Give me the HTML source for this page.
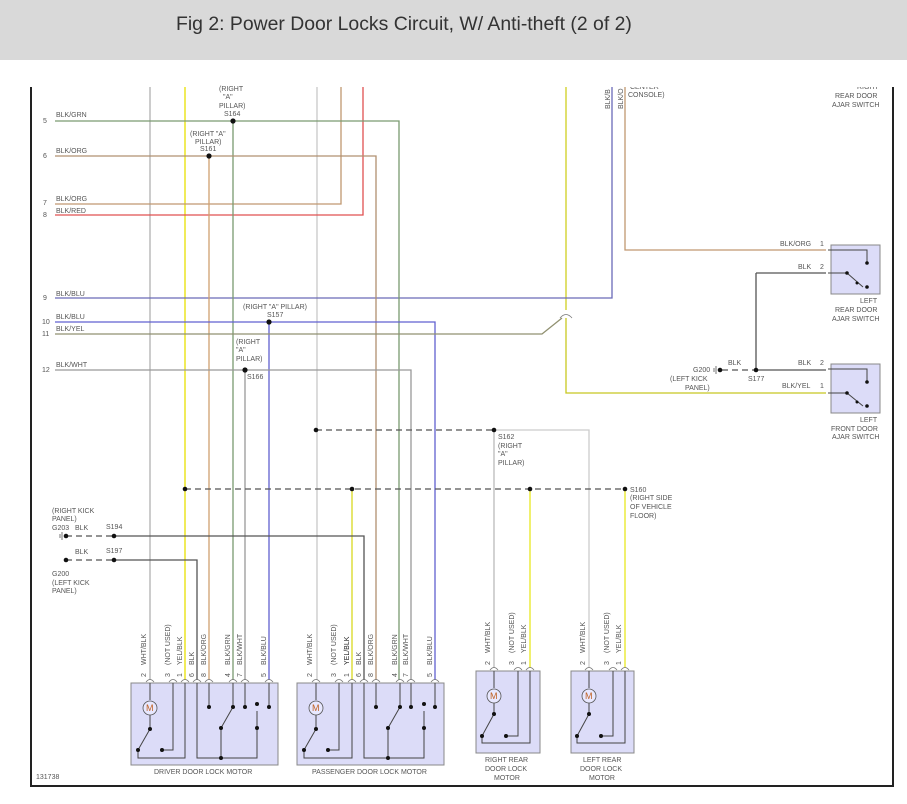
<!DOCTYPE html>
<html><head><meta charset="utf-8"><style>
html,body{margin:0;padding:0;background:#fff;}
body{width:907px;height:804px;overflow:hidden;position:relative;font-family:"Liberation Sans",sans-serif;}
.hdr{position:absolute;left:0;top:0;width:907px;height:60px;background:#d9d9d9;}
.hdr span{position:absolute;left:176px;top:13px;font-size:19.4px;color:#333;}
svg{position:absolute;left:0;top:0;}
text{font-family:"Liberation Sans",sans-serif;font-size:7px;fill:#555;}
</style></head><body>
<div class="hdr"><span>Fig 2: Power Door Locks Circuit, W/ Anti-theft (2 of 2)</span></div>
<svg width="907" height="804" viewBox="0 0 907 804">
<defs>
<g id="chev"><path d="M-4,2 Q0,-3 4,2" fill="none" stroke="#777" stroke-width="0.8"/></g>
<clipPath id="cp"><rect x="0" y="87" width="907" height="717"/></clipPath>
</defs>
<path d="M31,87 V786 H893 V87" fill="none" stroke="#222" stroke-width="2"/>
<g clip-path="url(#cp)"><text x="630" y="89">CENTER</text><text x="857" y="89">RIGHT</text></g>
<g fill="none" stroke-width="1.3">
<path d="M150,87 V680" stroke="#b0b0b0"/>
<path d="M185,87 V680" stroke="#e8e000"/>
<path d="M317,87 V680" stroke="#c8c8c8"/>
<path d="M341,87 V204 H55" stroke="#c09870"/>
<path d="M363,87 V215 H55" stroke="#e05050"/>
<path d="M566,87 V310" stroke="#d0d020"/>
<path d="M566,318 V393 H826" stroke="#c8c820"/>
<path d="M612,87 V298 H55" stroke="#6a6ab8"/>
<path d="M625,87 V250 H826" stroke="#c09870"/>
<path d="M55,121 H399 V680" stroke="#7a9a70"/>
<path d="M233,121 V680" stroke="#7a9a70"/>
<path d="M55,156 H376 V680" stroke="#b09070"/>
<path d="M209,156 V680" stroke="#d0a070"/>
<path d="M55,322 H435 V680" stroke="#6060d0"/>
<path d="M269,322 V680" stroke="#6060d0"/>
<path d="M55,334 H542 L562,318" stroke="#909070"/>
<path d="M55,370 H411 V680" stroke="#999"/>
<path d="M245,370 V680" stroke="#999"/>
<path d="M352,489 V680" stroke="#d8d820"/>
<path d="M494,430 H589 V668" stroke="#ccc"/>
<path d="M494,430 V668" stroke="#bbb"/>
<path d="M530,489 V668" stroke="#e8e820"/>
<path d="M625,489 V668" stroke="#e8e820"/>
<path d="M114,536 H364 V680" stroke="#555"/>
<path d="M114,560 H197 V680" stroke="#555"/>
<path d="M756,273 H826 M756,273 V370 H826" stroke="#555"/>
</g>
<g fill="none" stroke="#555" stroke-width="1.3" stroke-dasharray="6,4">
<path d="M316,430 H494"/>
<path d="M185,489 H625"/>
<path d="M66,536 H114"/>
<path d="M66,560 H114"/>
<path d="M722,370 H756"/>
</g>
<path d="M560,318 Q566,311 572,318" fill="none" stroke="#777" stroke-width="0.8"/>
<g fill="#111">
<circle cx="233" cy="121" r="2.6"/><circle cx="209" cy="156" r="2.6"/><circle cx="269" cy="322" r="2.6"/><circle cx="245" cy="370" r="2.6"/>
<circle cx="316" cy="430" r="2.3"/><circle cx="494" cy="430" r="2.3"/>
<circle cx="185" cy="489" r="2.3"/><circle cx="352" cy="489" r="2.3"/><circle cx="530" cy="489" r="2.3"/><circle cx="625" cy="489" r="2.3"/>
<circle cx="114" cy="536" r="2.3"/><circle cx="114" cy="560" r="2.3"/><circle cx="66" cy="536" r="2.3"/><circle cx="66" cy="560" r="2.3"/>
<circle cx="756" cy="370" r="2.3"/><circle cx="720" cy="370" r="2.3"/>
</g>
<g stroke="#555" stroke-width="0.8"><path d="M62,532 V540 M60,534 V538 M716,366 V374 M714,368 V372"/></g>
<text x="43" y="123">5</text><text x="56" y="117">BLK/GRN</text>
<text x="43" y="158">6</text><text x="56" y="153">BLK/ORG</text>
<text x="43" y="205">7</text><text x="56" y="201">BLK/ORG</text>
<text x="43" y="217">8</text><text x="56" y="213">BLK/RED</text>
<text x="43" y="300">9</text><text x="56" y="296">BLK/BLU</text>
<text x="42" y="324">10</text><text x="56" y="319">BLK/BLU</text>
<text x="42" y="336">11</text><text x="56" y="331">BLK/YEL</text>
<text x="42" y="372">12</text><text x="56" y="367">BLK/WHT</text>
<text x="219" y="91">(RIGHT</text><text x="223" y="99">"A"</text><text x="219" y="108">PILLAR)</text><text x="224" y="116">S164</text>
<text x="190" y="136">(RIGHT "A"</text><text x="195" y="144">PILLAR)</text><text x="200" y="151">S161</text>
<text x="243" y="309">(RIGHT "A" PILLAR)</text><text x="267" y="317">S157</text>
<text x="236" y="344">(RIGHT</text><text x="236" y="352">"A"</text><text x="236" y="361">PILLAR)</text><text x="247" y="379">S166</text>
<text x="498" y="439">S162</text><text x="498" y="448">(RIGHT</text><text x="498" y="456">"A"</text><text x="498" y="465">PILLAR)</text>
<text x="630" y="492">S160</text><text x="630" y="500">(RIGHT SIDE</text><text x="630" y="509">OF VEHICLE</text><text x="630" y="518">FLOOR)</text>
<text x="52" y="513">(RIGHT KICK</text><text x="52" y="521">PANEL)</text><text x="52" y="530">G203</text><text x="75" y="530">BLK</text><text x="106" y="529">S194</text>
<text x="75" y="554">BLK</text><text x="106" y="553">S197</text>
<text x="52" y="576">G200</text><text x="52" y="585">(LEFT KICK</text><text x="52" y="593">PANEL)</text>
<text x="628" y="97">CONSOLE)</text>
<text transform="translate(610,109) rotate(-90)">BLK/B</text>
<text transform="translate(623,109) rotate(-90)">BLK/O</text>
<text x="835" y="98">REAR DOOR</text><text x="832" y="107">AJAR SWITCH</text>
<text x="780" y="246">BLK/ORG</text><text x="820" y="246">1</text>
<text x="798" y="269">BLK</text><text x="820" y="269">2</text>
<text x="860" y="303">LEFT</text><text x="835" y="312">REAR DOOR</text><text x="832" y="321">AJAR SWITCH</text>
<text x="728" y="365">BLK</text><text x="693" y="372">G200</text><text x="670" y="381">(LEFT KICK</text><text x="685" y="390">PANEL)</text><text x="748" y="381">S177</text>
<text x="798" y="365">BLK</text><text x="820" y="365">2</text>
<text x="782" y="388">BLK/YEL</text><text x="820" y="388">1</text>
<text x="860" y="422">LEFT</text><text x="831" y="431">FRONT DOOR</text><text x="832" y="439">AJAR SWITCH</text>
<text x="36" y="779">131738</text>
<g>
<rect x="831" y="245" width="49" height="49" fill="#dcdcf8" stroke="#888"/>
<rect x="831" y="364" width="49" height="49" fill="#dcdcf8" stroke="#888"/>
<path d="M828,250 H867 V263 M828,273 H847 L863,287 M828,369 H867 V382 M828,393 H847 L863,406" fill="none" stroke="#444" stroke-width="1"/>
<g fill="#111"><circle cx="867" cy="263" r="1.8"/><circle cx="847" cy="273" r="1.8"/><circle cx="857" cy="283" r="1.5"/><circle cx="867" cy="287" r="1.8"/>
<circle cx="867" cy="382" r="1.8"/><circle cx="847" cy="393" r="1.8"/><circle cx="857" cy="402" r="1.5"/><circle cx="867" cy="406" r="1.8"/></g>
</g>
<g stroke="#888" fill="#dcdcf8">
<rect x="131" y="683" width="147" height="82"/>
<rect x="297" y="683" width="147" height="82"/>
<rect x="476" y="671" width="64" height="82"/>
<rect x="571" y="671" width="63" height="82"/>
</g>
<g fill="none" stroke="#444" stroke-width="1">
<path d="M150,683 V700 M150,715 V729 L138,750 M138,750 V758 H185 V683 M173,683 V750 H162 M197,683 V758 H257 V711 M209,683 V707 M233,683 V707 L221,728 V758 M245,683 V707 M269,683 V707"/>
<path d="M316,683 V700 M316,715 V729 L304,750 M304,750 V758 H352 V683 M339,683 V750 H328 M364,683 V758 H424 V711 M376,683 V707 M400,683 V707 L388,728 V758 M411,683 V707 M435,683 V707"/>
<path d="M494,671 V688 M494,703 V714 L482,736 V743 H530 V671 M518,671 V736 H506"/>
<path d="M589,671 V688 M589,703 V714 L577,736 V743 H625 V671 M613,671 V736 H601"/>
</g>
<g fill="#111">
<circle cx="150" cy="729" r="2"/><circle cx="138" cy="750" r="2"/><circle cx="162" cy="750" r="2"/><circle cx="209" cy="707" r="2"/><circle cx="233" cy="707" r="2"/><circle cx="221" cy="728" r="2"/><circle cx="245" cy="707" r="2"/><circle cx="269" cy="707" r="2"/><circle cx="257" cy="704" r="2"/><circle cx="257" cy="728" r="2"/><circle cx="221" cy="758" r="2"/>
<circle cx="316" cy="729" r="2"/><circle cx="304" cy="750" r="2"/><circle cx="328" cy="750" r="2"/><circle cx="376" cy="707" r="2"/><circle cx="400" cy="707" r="2"/><circle cx="388" cy="728" r="2"/><circle cx="411" cy="707" r="2"/><circle cx="435" cy="707" r="2"/><circle cx="424" cy="704" r="2"/><circle cx="424" cy="728" r="2"/><circle cx="388" cy="758" r="2"/>
<circle cx="494" cy="714" r="2"/><circle cx="482" cy="736" r="2"/><circle cx="506" cy="736" r="2"/>
<circle cx="589" cy="714" r="2"/><circle cx="577" cy="736" r="2"/><circle cx="601" cy="736" r="2"/>
</g>
<g fill="#e8e8ff" stroke="#555" stroke-width="0.8">
<circle cx="150" cy="708" r="7"/><circle cx="316" cy="708" r="7"/><circle cx="494" cy="696" r="7"/><circle cx="589" cy="696" r="7"/>
</g>
<text x="146" y="711" style="font-size:9px;fill:#c06020">M</text><text x="312" y="711" style="font-size:9px;fill:#c06020">M</text><text x="490" y="699" style="font-size:9px;fill:#c06020">M</text><text x="585" y="699" style="font-size:9px;fill:#c06020">M</text>
<g>
<use href="#chev" x="150" y="680"/><use href="#chev" x="173" y="680"/><use href="#chev" x="185" y="680"/><use href="#chev" x="197" y="680"/><use href="#chev" x="209" y="680"/><use href="#chev" x="233" y="680"/><use href="#chev" x="245" y="680"/><use href="#chev" x="269" y="680"/>
<use href="#chev" x="316" y="680"/><use href="#chev" x="339" y="680"/><use href="#chev" x="352" y="680"/><use href="#chev" x="364" y="680"/><use href="#chev" x="376" y="680"/><use href="#chev" x="400" y="680"/><use href="#chev" x="411" y="680"/><use href="#chev" x="435" y="680"/>
<use href="#chev" x="494" y="668"/><use href="#chev" x="518" y="668"/><use href="#chev" x="530" y="668"/>
<use href="#chev" x="589" y="668"/><use href="#chev" x="613" y="668"/><use href="#chev" x="625" y="668"/>
</g>
<g>
<text transform="translate(146,665) rotate(-90)">WHT/BLK</text><text transform="translate(170,665) rotate(-90)">(NOT USED)</text><text transform="translate(182,665) rotate(-90)">YEL/BLK</text><text transform="translate(194,665) rotate(-90)">BLK</text><text transform="translate(206,665) rotate(-90)">BLK/ORG</text><text transform="translate(230,665) rotate(-90)">BLK/GRN</text><text transform="translate(242,665) rotate(-90)">BLK/WHT</text><text transform="translate(266,665) rotate(-90)">BLK/BLU</text>
<text transform="translate(312,665) rotate(-90)">WHT/BLK</text><text transform="translate(336,665) rotate(-90)">(NOT USED)</text><text transform="translate(349,665) rotate(-90)" style="fill:#222">YEL/BLK</text><text transform="translate(361,665) rotate(-90)">BLK</text><text transform="translate(373,665) rotate(-90)">BLK/ORG</text><text transform="translate(397,665) rotate(-90)">BLK/GRN</text><text transform="translate(408,665) rotate(-90)">BLK/WHT</text><text transform="translate(432,665) rotate(-90)">BLK/BLU</text>
<text transform="translate(490,653) rotate(-90)">WHT/BLK</text><text transform="translate(514,653) rotate(-90)">(NOT USED)</text><text transform="translate(526,653) rotate(-90)">YEL/BLK</text>
<text transform="translate(585,653) rotate(-90)">WHT/BLK</text><text transform="translate(609,653) rotate(-90)">(NOT USED)</text><text transform="translate(621,653) rotate(-90)">YEL/BLK</text>
<text transform="translate(146,677) rotate(-90)">2</text><text transform="translate(170,677) rotate(-90)">3</text><text transform="translate(182,677) rotate(-90)">1</text><text transform="translate(194,677) rotate(-90)">6</text><text transform="translate(206,677) rotate(-90)">8</text><text transform="translate(230,677) rotate(-90)">4</text><text transform="translate(242,677) rotate(-90)">7</text><text transform="translate(266,677) rotate(-90)">5</text>
<text transform="translate(312,677) rotate(-90)">2</text><text transform="translate(336,677) rotate(-90)">3</text><text transform="translate(349,677) rotate(-90)">1</text><text transform="translate(361,677) rotate(-90)">6</text><text transform="translate(373,677) rotate(-90)">8</text><text transform="translate(397,677) rotate(-90)">4</text><text transform="translate(408,677) rotate(-90)">7</text><text transform="translate(432,677) rotate(-90)">5</text>
<text transform="translate(490,665) rotate(-90)">2</text><text transform="translate(514,665) rotate(-90)">3</text><text transform="translate(526,665) rotate(-90)">1</text>
<text transform="translate(585,665) rotate(-90)">2</text><text transform="translate(609,665) rotate(-90)">3</text><text transform="translate(621,665) rotate(-90)">1</text>
</g>
<text x="154" y="774">DRIVER DOOR LOCK MOTOR</text>
<text x="312" y="774">PASSENGER DOOR LOCK MOTOR</text>
<text x="485" y="762">RIGHT REAR</text><text x="485" y="771">DOOR LOCK</text><text x="494" y="780">MOTOR</text>
<text x="583" y="762">LEFT REAR</text><text x="580" y="771">DOOR LOCK</text><text x="589" y="780">MOTOR</text>
</svg>
</body></html>
